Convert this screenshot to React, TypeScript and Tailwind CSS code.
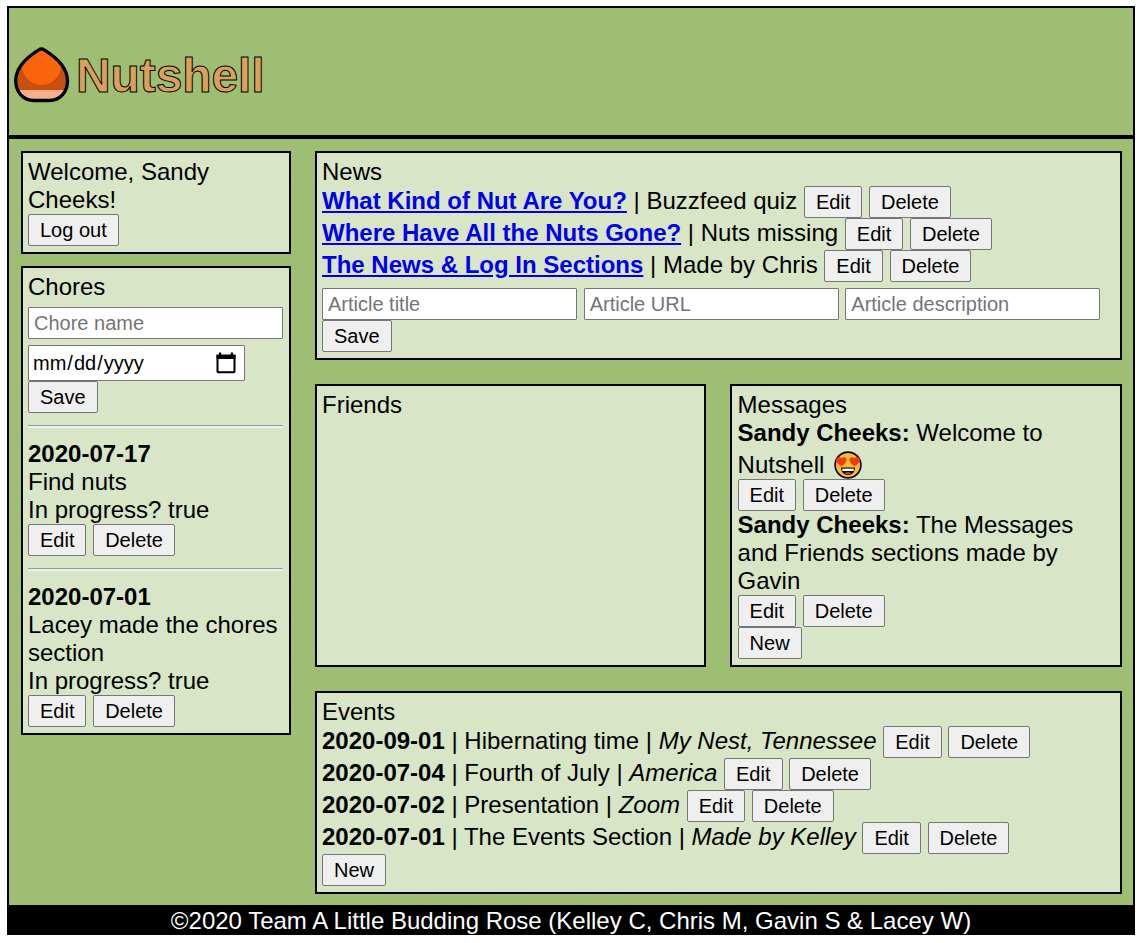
import type { ReactNode } from "react";

function Btn({ children }: { children: ReactNode }) {
  return (
    <button className="inline-block h-8 rounded-[2px] border border-[#767676] bg-[#efefef] px-[11px] text-[20px] leading-[30px] align-baseline">
      {children}
    </button>
  );
}

function EditDelete() {
  return (
    <>
      <Btn>Edit</Btn> <Btn>Delete</Btn>
    </>
  );
}

function Field({ placeholder }: { placeholder: string }) {
  return (
    <input
      placeholder={placeholder}
      className="h-8 w-[255px] rounded-[1px] border border-[#767676] bg-white px-[5px] text-[20px] leading-[30px] placeholder:text-[#757575]"
    />
  );
}

function Panel({ className, children }: { className: string; children: ReactNode }) {
  return (
    <section className={`border-2 border-black bg-[#d8e5c7] p-[5px] ${className}`}>{children}</section>
  );
}

function Chestnut() {
  return (
    <svg className="h-[58px] w-[58px] shrink-0" viewBox="0 0 58 58">
      <defs>
        <clipPath id="nut">
          <path d="M28.500 3.500C23 5 3 18 2.800 34C2.600 46 11 54.500 22 54.500H36C47 54.500 54.700 46 54.500 34C54.200 18 34 5 28.500 3.500Z" />
        </clipPath>
      </defs>
      <g clipPath="url(#nut)">
        <rect width="58" height="58" fill="#c84f10" />
        <circle cx="28.500" cy="19.500" r="19.500" fill="#f9640d" />
        <path d="M0 44h58v9H0z" fill="#f7af8b" />
        <path d="M0 53h58v5H0z" fill="#f4a47b" />
      </g>
      <path
        d="M25.800 3.800Q28.500 2 31.200 3.800C38 8 54.300 18.500 54.500 34.500C54.600 46 47 54.500 36 54.500H21C10.500 54.500 2.600 46 2.700 34.500C2.900 18.500 19 8 25.800 3.800Z"
        fill="none"
        stroke="#000"
        strokeWidth="3.300"
      />
    </svg>
  );
}

function HeartEyes() {
  return (
    <svg className="ml-[3px] inline-block h-7 w-7 align-[-6px]" viewBox="0 0 28 28">
      <circle cx="14" cy="14" r="12.900" fill="#fdb92e" stroke="#000" strokeWidth="1.600" />
      <path d="M7.500 15.300C4.500 13.500 2 11.500 2.100 9C2.200 6 6 4.900 7.500 7.600C9.700 4.900 13 6.500 12.500 9.500C12 12 9.500 14 7.500 15.300Z" fill="#f03a17" />
      <path d="M20.500 15.300C23.500 13.500 26 11.500 25.900 9C25.800 6 22 4.900 20.500 7.600C18.300 4.900 15 6.500 15.500 9.500C16 12 18.500 14 20.500 15.300Z" fill="#f03a17" />
      <path d="M7 16.500H21C21 21 18 24 14 24S7 21 7 16.500Z" fill="#000" />
      <path d="M8.300 17.600H19.700V20H8.300Z" fill="#fff" />
      <path d="M10.500 22.300C12 20.800 16 20.800 17.500 22.300C15.500 23.500 12.500 23.500 10.500 22.300Z" fill="#f03a17" />
    </svg>
  );
}

const news = [
  ["What Kind of Nut Are You?", "Buzzfeed quiz"],
  ["Where Have All the Nuts Gone?", "Nuts missing"],
  ["The News & Log In Sections", "Made by Chris"],
];

const chores = [
  ["2020-07-17", "Find nuts"],
  ["2020-07-01", "Lacey made the chores section"],
];

const events = [
  ["2020-09-01", "Hibernating time", "My Nest, Tennessee"],
  ["2020-07-04", "Fourth of July", "America"],
  ["2020-07-02", "Presentation", "Zoom"],
  ["2020-07-01", "The Events Section", "Made by Kelley"],
];

export default function App() {
  return (
    <div className="h-[943px] w-[1140px] bg-white pt-[6px] pl-[7px] font-['Liberation_Sans',Arial,sans-serif] text-[24px] leading-[28px] text-black">
      <div className="flex h-[929px] w-[1128px] flex-col border-2 border-black bg-[#9ebf73]">
        <header className="flex h-[131px] shrink-0 items-center border-b-4 border-black pt-[7px] pl-[4px]">
          <Chestnut />
          <h1 className="ml-[5px] pt-px text-[48px] leading-[56px] font-bold tracking-[-0.1px] text-[#dba05b] [-webkit-text-stroke:1px_black]">
            Nutshell
          </h1>
        </header>

        <main className="flex grow items-start gap-6 pt-3 pl-3">
          <div className="flex w-[270px] flex-col gap-3">
            <Panel className="h-[103px]">
              <p>Welcome, Sandy Cheeks!</p>
              <div className="h-8"><Btn>Log out</Btn></div>
            </Panel>
            <Panel className="h-[469px]">
              <h2>Chores</h2>
              <div className="mt-[6px] flex"><Field placeholder="Chore name" /></div>
              <div className="mt-[6px] flex h-9 w-[217px] items-center justify-between rounded-[1px] border border-[#767676] bg-white pr-[7px] pl-[4px] text-[20px]">
                <span className="flex">
                  <span className="pr-px">mm</span>/<span className="px-px">dd</span>/<span className="px-px">yyyy</span>
                </span>
                <svg className="h-[22px] w-[22px]" viewBox="0 0 22 22">
                  <path d="M2.500 3.500H19.500V19.500Q19.500 20.200 18.800 20.200H3.200Q2.500 20.200 2.500 19.500Z" fill="none" stroke="#000" strokeWidth="2" />
                  <path d="M1.500 3H20.500V7H1.500Z" />
                  <path d="M4 .500H6.200V4H4ZM15.800 .500H18V4H15.800Z" />
                </svg>
              </div>
              <div className="h-8"><Btn>Save</Btn></div>
              {chores.map(([date, name]) => (
                <div key={date}>
                  <hr className="my-3 h-[3px] w-[255px] border-t border-b-2 border-t-[#999999] border-b-[#eeeeee]" />
                  <p className="font-bold">{date}</p>
                  <p>{name}</p>
                  <p>In progress? true</p>
                  <div className="h-8"><EditDelete /></div>
                </div>
              ))}
            </Panel>
          </div>

          <div className="flex w-[807px] flex-col gap-6">
            <Panel className="h-[209px]">
              <h2>News</h2>
              {news.map(([title, text]) => (
                <div key={title} className="h-8">
                  <a href="#" className="font-bold text-[#0000ee] underline">{title}</a> | {text} <EditDelete />
                </div>
              ))}
              <div className="mt-[6px] flex gap-[6.67px]">
                <Field placeholder="Article title" />
                <Field placeholder="Article URL" />
                <Field placeholder="Article description" />
              </div>
              <div className="h-8"><Btn>Save</Btn></div>
            </Panel>

            <div className="flex h-[283px] gap-6">
              <Panel className="w-[391px]">
                <h2>Friends</h2>
              </Panel>
              <Panel className="w-[392px]">
                <div className="pl-[0.6px]">
                  <h2>Messages</h2>
                  <p><b>Sandy Cheeks:</b> Welcome to</p>
                  <div className="h-8 leading-[36px]">Nutshell <HeartEyes /></div>
                  <div className="h-8"><EditDelete /></div>
                  <p><b>Sandy Cheeks:</b> The Messages and Friends sections made by Gavin</p>
                  <div className="h-8"><EditDelete /></div>
                  <div className="h-8"><Btn>New</Btn></div>
                </div>
              </Panel>
            </div>

            <Panel className="h-[203px]">
              <h2>Events</h2>
              {events.map(([date, name, place]) => (
                <div key={date} className="h-8">
                  <b>{date}</b> | {name} | <i>{place}</i> <EditDelete />
                </div>
              ))}
              <div className="h-8"><Btn>New</Btn></div>
            </Panel>
          </div>
        </main>

        <footer className="h-7 shrink-0 bg-black text-center leading-[31px] text-white">
          ©2020 Team A Little Budding Rose (Kelley C, Chris M, Gavin S &amp; Lacey W)
        </footer>
      </div>
    </div>
  );
}
